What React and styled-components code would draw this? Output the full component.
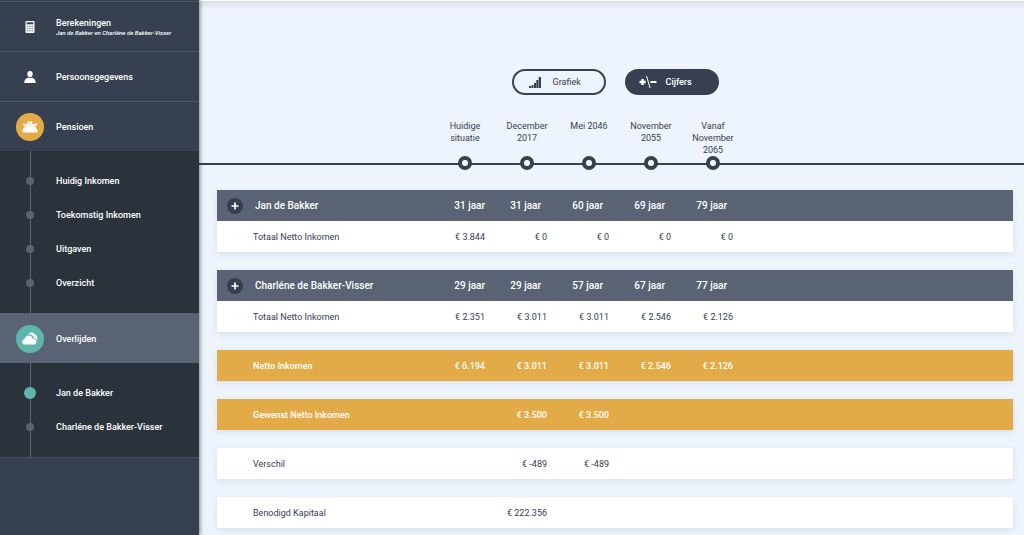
import React from 'react';
import styled, { createGlobalStyle } from 'styled-components';

const c = {
  ink: '#374050',
  deep: '#2a323c',
  slate: '#596373',
  sky: '#edf4fd',
  gold: '#e3ab48',
  teal: '#5fb5ac',
};

const GlobalStyle = createGlobalStyle`
  *, *::before, *::after { box-sizing: border-box; }
  body {
    margin: 0;
    background: ${c.sky};
    color: ${c.ink};
    font: 400 9px/12px Roboto, "Liberation Sans", sans-serif;
  }
`;

const Page = styled.div`
  display: flex;
  min-height: 100vh;
`;

const Sidebar = styled.nav`
  position: relative;
  z-index: 1;
  flex: 0 0 199px;
  padding-top: 1px;
  background: ${c.ink};
  box-shadow: 1px 0 4px rgba(42, 50, 60, 0.6);
`;

const MenuLink = styled.a`
  display: grid;
  grid-template-columns: 28px 1fr;
  column-gap: 12px;
  align-items: center;
  height: 50px;
  padding: 0 16px;
  border-top: 1px solid ${(p) => (p.$active ? c.slate : '#4d5766')};
  background: ${(p) => (p.$active ? c.slate : 'transparent')};
  color: #fff;
  font-weight: 500;
  text-decoration: none;
`;

const Badge = styled.span`
  display: grid;
  place-items: center;
  width: 28px;
  height: 28px;
  border-radius: 50%;
  background: ${(p) => p.$color || 'transparent'};
`;

const MenuText = styled.span`
  display: block;
`;

const MenuNote = styled.em`
  display: block;
  font-size: 6px;
  line-height: 8px;
  white-space: nowrap;
`;

const SubMenu = styled.ul`
  margin: 0;
  padding: 13px 16px;
  list-style: none;
  background: linear-gradient(${c.slate}, ${c.slate}) 30px 0 / 1px 100% no-repeat ${c.deep};
`;

const SubLink = styled.a`
  display: grid;
  grid-template-columns: 28px 1fr;
  column-gap: 12px;
  align-items: center;
  height: 34px;
  color: #fff;
  font-weight: 500;
  text-decoration: none;
`;

const Dot = styled.span`
  justify-self: center;
  width: ${(p) => (p.$active ? 12 : 8)}px;
  height: ${(p) => (p.$active ? 12 : 8)}px;
  border-radius: 50%;
  background: ${(p) => (p.$active ? c.teal : c.slate)};
`;

const SidebarEnd = styled.div`
  border-top: 1px solid #46505f;
`;

const Main = styled.main`
  flex: 1;
  min-width: 0;
  padding-bottom: 6px;
  background: linear-gradient(#d9dfe6, ${c.sky} 8px);
  border-top: 1px solid #fff;
`;

const Switcher = styled.div`
  display: flex;
  justify-content: center;
  gap: 19px;
  padding: 68px 11px 25px 18px;
`;

const ModeButton = styled.button`
  display: grid;
  grid-template-columns: 18px 1fr;
  column-gap: 9px;
  align-items: center;
  width: 94px;
  height: 26px;
  padding: 0 12px;
  border: 2px solid ${c.ink};
  border-radius: 13px;
  background: ${(p) => (p.$active ? c.ink : 'transparent')};
  color: ${(p) => (p.$active ? '#fff' : c.ink)};
  font: inherit;
  font-weight: ${(p) => (p.$active ? 500 : 400)};
  text-align: left;
  cursor: pointer;

  svg {
    justify-self: center;
  }
`;

const Timeline = styled.ol`
  position: relative;
  display: flex;
  margin: 0 0 20px;
  padding: 0 0 0 235px;
  list-style: none;

  &::before {
    content: '';
    position: absolute;
    right: 0;
    bottom: 5px;
    left: 0;
    height: 2px;
    background: ${c.ink};
  }
`;

const Moment = styled.li`
  position: relative;
  display: flex;
  flex: 0 0 62px;
  flex-direction: column;
  align-items: center;
  justify-content: space-between;
  padding: 0 8px;
  text-align: center;

  &::after {
    content: '';
    width: 14px;
    height: 14px;
    border: 4px solid ${c.ink};
    border-radius: 50%;
    background: #fff;
  }
`;

const Cards = styled.div`
  display: grid;
  gap: 18px;
  padding: 0 11px 0 18px;
`;

const Card = styled.table`
  width: 100%;
  table-layout: fixed;
  border-collapse: collapse;
  background: ${(p) => (p.$gold ? c.gold : '#fff')};
  color: ${(p) => (p.$gold ? '#fff' : c.ink)};
  font-weight: ${(p) => (p.$gold ? 500 : 400)};
  box-shadow: 0 2px 6px rgba(90, 100, 150, 0.14);
`;

const LabelCol = styled.col`
  width: 206px;
`;

const ValueCol = styled.col`
  width: 62px;
`;

const HeadRow = styled.tr`
  height: 31px;
  background: ${c.slate};
  color: #fff;
  font-size: 10px;
`;

const Row = styled.tr`
  height: 31px;
`;

const PersonCell = styled.th`
  padding: 0 0 0 10px;
  font-weight: 500;
  text-align: left;
`;

const Person = styled.div`
  display: flex;
  align-items: center;
  gap: 12px;
  white-space: nowrap;
`;

const AgeCell = styled.th`
  padding: 0 ${(p) => (p.$first ? 0 : 6)}px 0 0;
  font-weight: 500;
  text-align: right;
`;

const LabelCell = styled.th`
  padding: 0 0 0 36px;
  font-weight: inherit;
  text-align: left;
`;

const ValueCell = styled.td`
  padding: 0;
  text-align: right;
  white-space: nowrap;
`;

const ExpandButton = styled.button`
  display: grid;
  place-items: center;
  width: 16px;
  height: 16px;
  padding: 0;
  border: 0;
  border-radius: 50%;
  background: ${c.ink};
  color: #fff;
  cursor: pointer;
`;

const CalculatorIcon = () => (
  <svg width="10" height="12" viewBox="0 0 10 12" aria-hidden="true">
    <rect width="9" height="12" x="0.5" rx="1" fill="#fff" />
    <rect x="1.7" y="1.3" width="6.6" height="2" fill={c.ink} />
    {[4.7, 6.9, 9.1].map((y) =>
      [1.8, 4.2, 6.6].map((x) => (
        <rect key={`${x}-${y}`} x={x} y={y} width="1.5" height="1.3" fill={c.ink} opacity="0.6" />
      ))
    )}
  </svg>
);

const PersonIcon = () => (
  <svg width="12" height="12" viewBox="0 0 12 12" fill="#fff" aria-hidden="true">
    <ellipse cx="6" cy="3.1" rx="2.7" ry="3.1" />
    <path d="M0.2 12C0.2 8.6 2 7.2 4.4 6.4Q6 7.4 7.6 6.4C10 7.2 11.8 8.6 11.8 12Z" />
  </svg>
);

const PurseIcon = () => (
  <svg width="16" height="12" viewBox="0 0 16 12" fill="#fff" aria-hidden="true">
    <path d="M5.5 0.6h2.1v2.4H5.5zM8.2 0.3h2v2.7h-2z" />
    <path d="M1 3.2Q1.6 2.2 2.8 2.8L4 3.3h8l1.2-.5Q14.4 2.2 15 3.2T14 4.8L13 5.5H3L2 4.8Q.6 4.4 1 3.2Z" />
    <path d="M3 5.4h10Q15.6 8 15.6 10.3Q15.6 11.6 14.3 11.6H1.7Q.4 11.6 .4 10.3Q.4 8 3 5.4Z" />
  </svg>
);

const CloudsIcon = () => (
  <svg width="16" height="13" viewBox="0 0 16 13" fill="#fff" aria-hidden="true">
    <path d="M6.2 2.3C7.6 .2 11.2 -.2 12.6 2.3C14.3 2.7 15.6 4.2 15.4 6C15.3 7.1 14.9 7.7 14.3 8.2C13.8 6.9 12.9 6.3 12 6C11.4 3.6 9 2 6.2 2.3Z" />
    <path d="M3.3 12.6C-.8 12.6 -.7 7.6 2.7 7.2C2.9 2.5 9.8 1.9 10.9 6.8C15.3 6.7 15.6 12.6 11.7 12.6Z" />
  </svg>
);

const BarsIcon = () => (
  <svg width="12" height="12" viewBox="0 0 12 12" fill="currentColor" aria-hidden="true">
    <path d="M0 10h2v2H0zM2.5 9h2v3h-2zM5 7h2v5H5zM7.3 4h2v8h-2zM9.7 1H12v11H9.7z" />
  </svg>
);

const PlusMinusIcon = () => (
  <svg width="18" height="14" viewBox="0 0 18 14" fill="none" stroke="currentColor" aria-hidden="true">
    <path d="M0.5 7h6.2M3.6 4v6" strokeWidth="2.4" />
    <path d="M7.5 1l3.6 12" strokeWidth="1" />
    <path d="M11.5 7H17.5" strokeWidth="2" />
  </svg>
);

const PlusIcon = () => (
  <svg width="8" height="8" viewBox="0 0 8 8" stroke="currentColor" strokeWidth="1.7" aria-hidden="true">
    <path d="M0.5 4h7M4 0.5v7" />
  </svg>
);

const menu = [
  { label: 'Berekeningen', note: 'Jan de Bakker en Charléne de Bakker-Visser', icon: CalculatorIcon },
  { label: 'Persoonsgegevens', icon: PersonIcon },
  {
    label: 'Pensioen',
    icon: PurseIcon,
    color: c.gold,
    items: ['Huidig Inkomen', 'Toekomstig Inkomen', 'Uitgaven', 'Overzicht'],
  },
  {
    label: 'Overlijden',
    icon: CloudsIcon,
    color: c.teal,
    active: true,
    current: 'Jan de Bakker',
    items: ['Jan de Bakker', 'Charléne de Bakker-Visser'],
  },
];

const moments = ['Huidige situatie', 'December 2017', 'Mei 2046', 'November 2055', 'Vanaf November 2065'];

const cards = [
  {
    person: 'Jan de Bakker',
    ages: [31, 31, 60, 69, 79],
    label: 'Totaal Netto Inkomen',
    values: ['3.844', '0', '0', '0', '0'],
  },
  {
    person: 'Charléne de Bakker-Visser',
    ages: [29, 29, 57, 67, 77],
    label: 'Totaal Netto Inkomen',
    values: ['2.351', '3.011', '3.011', '2.546', '2.126'],
  },
  { label: 'Netto Inkomen', gold: true, values: ['6.194', '3.011', '3.011', '2.546', '2.126'] },
  { label: 'Gewenst Netto Inkomen', gold: true, values: ['', '3.500', '3.500', '', ''] },
  { label: 'Verschil', values: ['', '-489', '-489', '', ''] },
  { label: 'Benodigd Kapitaal', values: ['', '222.356', '', '', ''] },
];

function MenuSection({ label, note, icon: Icon, color, active, current, items }) {
  return (
    <>
      <MenuLink href="#" $active={active}>
        <Badge $color={color}>
          <Icon />
        </Badge>
        <MenuText>
          {label}
          {note && <MenuNote>{note}</MenuNote>}
        </MenuText>
      </MenuLink>
      {items && (
        <SubMenu>
          {items.map((item) => (
            <li key={item}>
              <SubLink href="#">
                <Dot $active={item === current} />
                {item}
              </SubLink>
            </li>
          ))}
        </SubMenu>
      )}
    </>
  );
}

function IncomeCard({ person, ages, label, gold, values }) {
  return (
    <Card $gold={gold}>
      <colgroup>
        <LabelCol />
        {values.map((_, i) => (
          <ValueCol key={i} />
        ))}
        <col />
      </colgroup>
      {person && (
        <thead>
          <HeadRow>
            <PersonCell scope="col">
              <Person>
                <ExpandButton type="button" aria-label={`${person} uitklappen`}>
                  <PlusIcon />
                </ExpandButton>
                {person}
              </Person>
            </PersonCell>
            {ages.map((age, i) => (
              <AgeCell key={i} scope="col" $first={i === 0}>
                {age} jaar
              </AgeCell>
            ))}
            <td />
          </HeadRow>
        </thead>
      )}
      <tbody>
        <Row>
          <LabelCell scope="row">{label}</LabelCell>
          {values.map((value, i) => (
            <ValueCell key={i}>{value && `€ ${value}`}</ValueCell>
          ))}
          <td />
        </Row>
      </tbody>
    </Card>
  );
}

export default function App() {
  return (
    <Page>
      <GlobalStyle />
      <Sidebar>
        {menu.map((section) => (
          <MenuSection key={section.label} {...section} />
        ))}
        <SidebarEnd />
      </Sidebar>
      <Main>
        <Switcher>
          <ModeButton type="button">
            <BarsIcon />
            Grafiek
          </ModeButton>
          <ModeButton type="button" $active>
            <PlusMinusIcon />
            Cijfers
          </ModeButton>
        </Switcher>
        <Timeline>
          {moments.map((moment) => (
            <Moment key={moment}>{moment}</Moment>
          ))}
        </Timeline>
        <Cards>
          {cards.map((card, i) => (
            <IncomeCard key={i} {...card} />
          ))}
        </Cards>
      </Main>
    </Page>
  );
}
